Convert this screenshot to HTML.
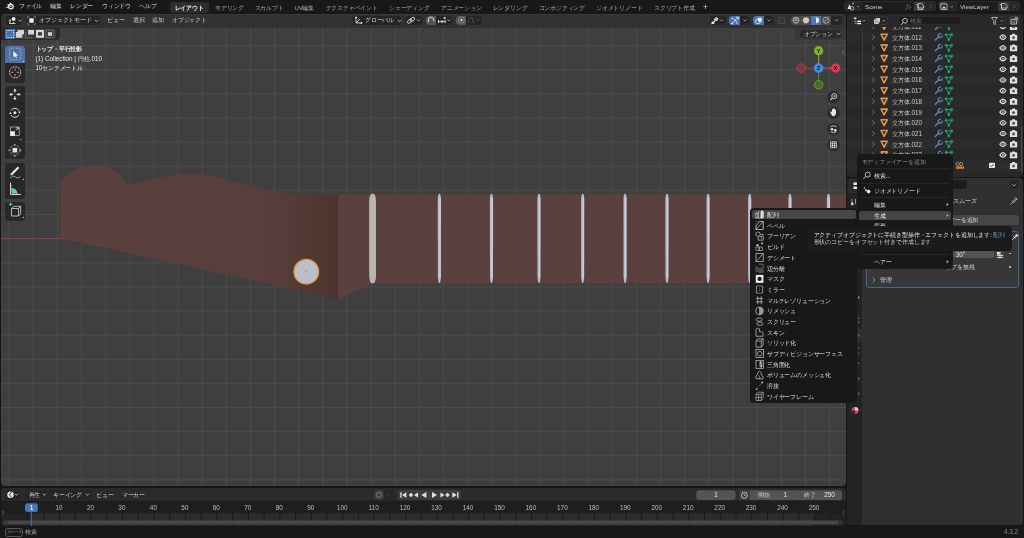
<!DOCTYPE html>
<html><head><meta charset="utf-8">
<style>
*{margin:0;padding:0;box-sizing:border-box}
body{will-change:transform}
html,body{width:1024px;height:538px;overflow:hidden;background:#161616;font-family:"Liberation Sans",sans-serif;color:#d0d0d0;font-size:6px;line-height:1}
.a{position:absolute}
.t{position:absolute;white-space:nowrap;font-size:6px;line-height:8px;color:#cfcfcf;font-weight:500;letter-spacing:-0.18px}
.n{letter-spacing:0}
#top{left:0;top:0;width:1024px;height:14px;background:#181818}
#vp{left:1px;top:13.8px;width:845px;height:472.2px;border-radius:4px;overflow:hidden;background-color:#3f3f3f}
#grid{left:0;top:0;width:845px;height:472px}
#vphead{left:0;top:0;width:845px;height:13.8px;background:rgba(47,47,47,0.85);box-shadow:inset 0 1px 0 rgba(255,255,255,0.045)}
#outl{left:846.7px;top:13.9px;width:176px;height:163px;border-radius:4px;overflow:hidden;background:#282828}
#props{left:847.2px;top:178.1px;width:175.5px;height:346.7px;border-radius:4px;overflow:hidden;background:#303030}
#tl{left:1px;top:487.8px;width:845px;height:37.8px;border-radius:4px;overflow:hidden;background:#1e1e1e}
#status{left:0;top:525.6px;width:1024px;height:12.4px;background:#181818}
</style></head>
<body>
<div id="top" class="a">
 <svg class="a" style="left:0;top:0" width="18" height="13" viewBox="0 0 18 13"><path d="M5.3 7.9 L8.7 5.6 L6.7 4.6 L9.6 4.1 L10 2.3 L12.3 4.2 L10.5 5 L8.5 7.5 Z" fill="#e6e6e6"/><circle cx="10.9" cy="6.6" r="2.3" fill="none" stroke="#e6e6e6" stroke-width="1.3"/><circle cx="10.9" cy="6.5" r="0.8" fill="#e6e6e6"/></svg>
 <span class="t" style="left:19px;top:2.3px;color:#d6d6d6;width:23.28px;text-align-last:justify">ファイル</span>
 <span class="t" style="left:50px;top:2.3px;color:#d6d6d6;width:11.64px;text-align-last:justify">編集</span>
 <span class="t" style="left:70px;top:2.3px;color:#d6d6d6;width:23.28px;text-align-last:justify">レンダー</span>
 <span class="t" style="left:102px;top:2.3px;color:#d6d6d6;width:29.11px;text-align-last:justify">ウィンドウ</span>
 <span class="t" style="left:139px;top:2.3px;color:#d6d6d6;width:17.47px;text-align-last:justify">ヘルプ</span>
 <div class="a" style="left:169.5px;top:2.4px;width:39px;height:10.3px;background:#2d2d2d;border-radius:3px"></div>
 <span class="t" style="left:174.5px;top:3.5px;color:#f0f0f0;font-weight:bold;width:29.11px;text-align-last:justify">レイアウト</span>
 <span class="t" style="left:215px;top:3.5px;color:#a8a8a8;width:29.11px;text-align-last:justify">モデリング</span>
 <span class="t" style="left:254.5px;top:3.5px;color:#a8a8a8;width:29.11px;text-align-last:justify">スカルプト</span>
 <span class="t" style="left:294.5px;top:3.5px;color:#a8a8a8;width:19.62px;text-align-last:justify">UV編集</span>
 <span class="t" style="left:325.5px;top:3.5px;color:#a8a8a8;width:52.39px;text-align-last:justify">テクスチャペイント</span>
 <span class="t" style="left:389px;top:3.5px;color:#a8a8a8;width:40.75px;text-align-last:justify">シェーディング</span>
 <span class="t" style="left:441px;top:3.5px;color:#a8a8a8;width:40.75px;text-align-last:justify">アニメーション</span>
 <span class="t" style="left:492.5px;top:3.5px;color:#a8a8a8;width:34.92px;text-align-last:justify">レンダリング</span>
 <span class="t" style="left:538.5px;top:3.5px;color:#a8a8a8;width:46.56px;text-align-last:justify">コンポジティング</span>
 <span class="t" style="left:596px;top:3.5px;color:#a8a8a8;width:46.56px;text-align-last:justify">ジオメトリノード</span>
 <span class="t" style="left:654px;top:3.5px;color:#a8a8a8;width:40.75px;text-align-last:justify">スクリプト作成</span>
 <span class="t" style="left:702.8px;top:3.2px;color:#c8c8c8;font-size:9px;line-height:9px;font-weight:normal">+</span>
 <!-- scene -->
 <div class="a" style="left:844.4px;top:1.4px;width:91.3px;height:10.1px;background:#262626;border-radius:3px;border:0.6px solid #2c2c2c"></div>
 <div class="a" style="left:862px;top:2px;width:52.3px;height:9px;background:#1d1d1d"></div>
 <div class="a" style="left:914.3px;top:2px;width:11.2px;height:9px;background:#3a3a3a"></div>
 <span class="t n" style="left:865px;top:2.6px;color:#d0d0d0;font-size:6.2px">Scene</span>
 <div class="a" style="left:938.5px;top:1.4px;width:81px;height:10.1px;background:#262626;border-radius:3px;border:0.6px solid #2c2c2c"></div>
 <div class="a" style="left:956.5px;top:2px;width:41.5px;height:9px;background:#1d1d1d"></div>
 <div class="a" style="left:998px;top:2px;width:11px;height:9px;background:#3a3a3a"></div>
 <span class="t n" style="left:960px;top:2.6px;color:#d0d0d0;font-size:6.2px">ViewLayer</span>
 <svg class="a" style="left:0;top:0" width="1024" height="14">
  <path d="M847.5 9 L849.5 4 L851.5 9 Z" fill="#e0e0e0"/><circle cx="852" cy="8.3" r="1.8" fill="none" stroke="#ccc" stroke-width="0.7"/><circle cx="853" cy="3.5" r="0.8" fill="#ddd"/>
  <path d="M856.8 6 L858 7.2 L859.2 6" stroke="#bbb" stroke-width="0.6" fill="none"/>
  <path d="M905 10 L907.5 7.5 M906 5.5 L909.5 9 M908 4 L911 7 M908 4 L907 6 M911 7 L909 8" stroke="#777" stroke-width="0.6" fill="none"/>
  <path d="M916.5 4.5 H918 V9.5 H922.5 V8 M918 3.5 H921.5 L923.5 5.5 V8 H918 Z" stroke="#ddd" stroke-width="0.7" fill="none"/>
  <path d="M928.5 4.5 L932.5 8.5 M932.5 4.5 L928.5 8.5" stroke="#555" stroke-width="0.6"/>
  <path d="M941 9.5 V4 H947 V9.5 Z" fill="none" stroke="#ddd" stroke-width="0.7"/><path d="M942 8.5 L944 6 L946 8.5 Z" fill="#ddd"/><path d="M940 8.5 V3 H946" stroke="#aaa" stroke-width="0.5" fill="none"/>
  <path d="M950.5 6 L951.7 7.2 L952.9 6" stroke="#bbb" stroke-width="0.6" fill="none"/>
  <path d="M1000 4.5 H1001.5 V9.5 H1006 V8 M1001.5 3.5 H1005 L1007 5.5 V8 H1001.5 Z" stroke="#ddd" stroke-width="0.7" fill="none"/>
  <path d="M1012.5 4.5 L1016.5 8.5 M1016.5 4.5 L1012.5 8.5" stroke="#555" stroke-width="0.6"/>
 </svg>
</div>
<div id="vp" class="a">
  <svg id="grid" class="a" width="845" height="472" viewBox="0 0 845 472">
    <defs>
      <pattern id="gp" x="7.6" y="6.95" width="24.13" height="24.13" patternUnits="userSpaceOnUse">
        <rect x="0" y="0" width="1" height="24.13" fill="#4b4b4b"/>
        <rect x="0" y="0" width="24.13" height="1" fill="#4b4b4b"/>
      </pattern>
    </defs>
    <rect width="845" height="472" fill="url(#gp)"/>
  </svg>
  <div id="vphead" class="a">
  <div class="a" style="left:5px;top:2px;width:15px;height:9px;background:#252525;border-radius:3px"></div>
  <svg class="a" style="left:6.5px;top:2px" width="14" height="9" viewBox="0 0 14 9"><path d="M2 8 V3.2 M1.2 7.5 H7.5 M0.8 4.8 H3 M5.5 7.5 V6" stroke="#d8d8d8" stroke-width="0.9" fill="none"/><circle cx="5.6" cy="3" r="2" fill="#e6e6e6"/><path d="M10.3 3.7 L11.9 5.4 L13.5 3.7" stroke="#c8c8c8" stroke-width="0.8" fill="none"/></svg>
  <div class="a" style="left:25px;top:2px;width:74px;height:9px;background:#252525;border-radius:3px"></div>
  <svg class="a" style="left:26px;top:1.8px" width="9" height="9" viewBox="0 0 9 9"><rect x="2.3" y="2.3" width="4.4" height="4.4" rx="0.4" fill="#f0f0f0"/><path d="M0.7 2.3 V0.7 H2.3 M6.7 0.7 H8.3 V2.3 M8.3 6.7 V8.3 H6.7 M2.3 8.3 H0.7 V6.7" stroke="#bbb" stroke-width="0.6" fill="none"/></svg>
  <span class="t" style="left:38.3px;top:2.5px;width:52.39px;text-align-last:justify">オブジェクトモード</span>
  <svg class="a" style="left:92.5px;top:4.8px" width="6" height="4" viewBox="0 0 6 4"><path d="M0.7 0.8 L2.6 2.8 L4.5 0.8" stroke="#c8c8c8" stroke-width="0.8" fill="none"/></svg>
  <span class="t" style="left:106px;top:2.5px;width:17.47px;text-align-last:justify">ビュー</span>
  <span class="t" style="left:132px;top:2.5px;width:11.64px;text-align-last:justify">選択</span>
  <span class="t" style="left:151px;top:2.5px;width:11.64px;text-align-last:justify">追加</span>
  <span class="t" style="left:171px;top:2.5px;width:34.92px;text-align-last:justify">オブジェクト</span>
  <div class="a" style="left:351.5px;top:2.4px;width:48.5px;height:8.5px;background:#252525;border-radius:3px"></div>
  <svg class="a" style="left:353px;top:2.4px" width="9" height="9" viewBox="0 0 9 9"><path d="M2 1 V7 H8 M2 7 L6 3" stroke="#ddd" stroke-width="0.9" fill="none"/><circle cx="2" cy="1.5" r="0.9" fill="#ddd"/><circle cx="7.5" cy="7" r="0.9" fill="#ddd"/></svg>
  <span class="t" style="left:364px;top:2.5px;width:29.11px;text-align-last:justify">グローバル</span>
  <svg class="a" style="left:395.5px;top:4.8px" width="6" height="4" viewBox="0 0 6 4"><path d="M0.7 0.8 L2.6 2.8 L4.5 0.8" stroke="#c8c8c8" stroke-width="0.8" fill="none"/></svg>
  <div class="a" style="left:405px;top:2.4px;width:15.5px;height:8.5px;background:#252525;border-radius:3px"></div>
  <svg class="a" style="left:405px;top:2.4px" width="16" height="9" viewBox="0 0 16 9"><ellipse cx="3.7" cy="5.2" rx="2.6" ry="1.6" transform="rotate(-40 3.7 5.2)" fill="none" stroke="#e0e0e0" stroke-width="0.85"/><ellipse cx="6.4" cy="3.4" rx="2.6" ry="1.6" transform="rotate(-40 6.4 3.4)" fill="none" stroke="#e0e0e0" stroke-width="0.85"/><path d="M11.2 3.6 L12.6 5 L14 3.6" stroke="#c8c8c8" stroke-width="0.8" fill="none"/></svg>
  <div class="a" style="left:425px;top:2.4px;width:26px;height:8.5px;background:#252525;border-radius:3px"></div>
  <div class="a" style="left:425px;top:2.4px;width:10px;height:8.5px;background:#565656;border-radius:3px 0 0 3px"></div>
  <svg class="a" style="left:425px;top:2.4px" width="10" height="9" viewBox="0 0 10 9"><path d="M2.6 6.4 L2.2 4.2 A2.9 2.9 0 0 1 7.6 2.8 L7.8 5.2" stroke="#bdbdbd" stroke-width="1.3" fill="none"/><path d="M4.4 6 L4.2 4.4 A1.2 1.2 0 0 1 6.2 3.6 L6.3 5" stroke="#555" stroke-width="0.5" fill="none"/></svg>
  <svg class="a" style="left:436px;top:2.4px" width="15" height="9" viewBox="0 0 15 9"><path d="M1 5.6 H8.5 M1.4 4 V7.2 M5 4 V7.2 M8.1 4 V7.2" stroke="#e0e0e0" stroke-width="0.9" fill="none"/><circle cx="7.6" cy="1.9" r="1" fill="#f0f0f0"/><path d="M10.4 3.6 L11.8 5 L13.2 3.6" stroke="#c8c8c8" stroke-width="0.8" fill="none"/></svg>
  <div class="a" style="left:454.5px;top:2.4px;width:26px;height:8.5px;background:#252525;border-radius:3px"></div>
  <div class="a" style="left:454.5px;top:2.4px;width:10.5px;height:8.5px;background:#565656;border-radius:3px 0 0 3px"></div>
  <svg class="a" style="left:455.5px;top:2.5px" width="9" height="8" viewBox="0 0 9 8"><circle cx="4.4" cy="4" r="3" fill="none" stroke="#999" stroke-width="0.6"/><circle cx="4.4" cy="4" r="1.1" fill="#eee"/></svg>
  <svg class="a" style="left:466px;top:2.5px" width="14" height="8" viewBox="0 0 14 8"><path d="M1 7 Q3 1 4 1 Q5 1 7 7" stroke="#666" stroke-width="0.7" fill="none"/><path d="M9.5 3 L11 4.5 L12.5 3" stroke="#555" stroke-width="0.7" fill="none"/></svg>
  <!-- right side -->
  <div class="a" style="left:708.5px;top:2.4px;width:16px;height:8.5px;background:#252525;border-radius:3px"></div>
  <svg class="a" style="left:709px;top:2.4px" width="15" height="9" viewBox="0 0 15 9"><path d="M1.2 8.3 L2 5 L3 6 L4.4 4.6 L5.3 5.5 L3.9 6.9 L4.9 7.7 Z" fill="#e8e8e8"/><path d="M3.6 3.6 L6 1 L8.3 2.2 L7.6 4.8 L5 5 Z" fill="#d8d8d8"/><path d="M5.3 2.4 L7 3.4" stroke="#555" stroke-width="0.5"/><path d="M10 3.5 L11.5 5 L13 3.5" stroke="#bbb" stroke-width="0.7" fill="none"/></svg>
  <div class="a" style="left:728px;top:2.4px;width:21px;height:8.5px;background:#252525;border-radius:3px"></div>
  <div class="a" style="left:728px;top:2.4px;width:10.5px;height:8.5px;background:#4772b3;border-radius:3px 0 0 3px"></div>
  <svg class="a" style="left:729px;top:2.4px" width="20" height="9" viewBox="0 0 20 9"><path d="M1.8 7.8 L8.3 1.3 M5.9 1.3 H8.3 V3.7 M1.4 2.3 Q6 2.8 7.2 7.9" stroke="#f0f0f0" stroke-width="0.8" fill="none"/><circle cx="1.9" cy="7.6" r="0.9" fill="#f0f0f0"/><path d="M13.5 3.5 L15 5 L16.5 3.5" stroke="#bbb" stroke-width="0.7" fill="none"/></svg>
  <div class="a" style="left:752px;top:2.4px;width:21px;height:8.5px;background:#252525;border-radius:3px"></div>
  <div class="a" style="left:752px;top:2.4px;width:10.5px;height:8.5px;background:#4772b3;border-radius:3px 0 0 3px"></div>
  <svg class="a" style="left:753px;top:2.4px" width="20" height="9" viewBox="0 0 20 9"><circle cx="4" cy="5.3" r="2.5" fill="none" stroke="#f0f0f0" stroke-width="0.8"/><circle cx="5.8" cy="3.8" r="2.3" fill="#f0f0f0"/><path d="M13.5 3.5 L15 5 L16.5 3.5" stroke="#bbb" stroke-width="0.7" fill="none"/></svg>
  <div class="a" style="left:775.9px;top:2.2px;width:9.8px;height:8.7px;background:#313131;border-radius:3px"></div>
  <svg class="a" style="left:776.3px;top:2.4px" width="9" height="9" viewBox="0 0 9 9"><rect x="1.2" y="1.2" width="6.5" height="6.5" fill="none" stroke="#555" stroke-width="0.6"/><rect x="2.7" y="2.7" width="3.5" height="3.5" fill="none" stroke="#4a4a4a" stroke-width="0.6"/></svg>
  <div class="a" style="left:789.5px;top:2.4px;width:51.5px;height:8.5px;background:#252525;border-radius:3px"></div>
  <div class="a" style="left:789.5px;top:2.4px;width:10px;height:8.5px;background:#4a4a4a;border-radius:3px 0 0 3px"></div>
  <div class="a" style="left:799.5px;top:2.4px;width:10px;height:8.5px;background:#4a4a4a"></div>
  <div class="a" style="left:809.5px;top:2.4px;width:10px;height:8.5px;background:#4772b3"></div>
  <div class="a" style="left:819.5px;top:2.4px;width:10px;height:8.5px;background:#4a4a4a"></div>
  <svg class="a" style="left:789.5px;top:2.4px" width="52" height="9" viewBox="0 0 52 9"><circle cx="5" cy="4.3" r="3" fill="none" stroke="#ddd" stroke-width="0.6"/><path d="M2 4.3 H8 M5 1.3 V7.3 M2.8 2.5 Q5 4 7.2 2.5" stroke="#ddd" stroke-width="0.5" fill="none"/><circle cx="15" cy="4.3" r="3.1" fill="#c8c8c8"/><circle cx="25" cy="4.3" r="3" fill="#f0f0f0"/><path d="M25 1.3 A3 3 0 0 0 25 7.3 Z" fill="#4772b3"/><path d="M25 4.3 H22" stroke="#4772b3" stroke-width="0.1"/><circle cx="35" cy="4.3" r="3" fill="none" stroke="#ddd" stroke-width="0.6"/><path d="M33 6 L37 2.5" stroke="#ddd" stroke-width="0.6"/><path d="M44 3.5 L45.5 5 L47 3.5" stroke="#bbb" stroke-width="0.7" fill="none"/></svg>
</div>

<svg class="a" style="left:0;top:0" width="845" height="472" viewBox="1 13.8 845 472">
 <defs>
  <linearGradient id="lg1" x1="60" y1="0" x2="338" y2="0" gradientUnits="userSpaceOnUse">
   <stop offset="0" stop-color="#5a413e"/><stop offset="0.78" stop-color="#583e3a"/><stop offset="1" stop-color="#4d332e"/>
  </linearGradient>
 </defs>
 <path d="M1 238.3 H68" stroke="#9c3a48" stroke-width="0.9"/>
 <path d="M60.6 182 L64 178 L69.5 173.6 L76 169.5 L82.5 166.5 L89 165 L95.5 164.7 L101 165.2 L105.8 166.5 L111 169 L117.9 173.5 L122 178 L128.4 185.2 L155 178 L177.4 174.6 L190.9 173.5 L211 175.3 L233.5 181.3 L256 187 L278.5 192.1 L301 194.8 L338.2 194.1 L338.2 299 L60.6 237.7 Z" fill="url(#lg1)"/>
 <path d="M338.2 194.1 L846 194.1 L846 282.6 L370.7 283.2 L338.2 299 Z" fill="#5b413e"/>
 <path d="M369.2 200 Q369.5 193.2 372.6 193.2 Q375.7 193.2 376 200 L376 276 Q375.7 283.3 372.6 283.3 Q369.5 283.3 369.2 276 Z" fill="#b6b6ae"/>
 <path d="M437.79999999999995 200 Q437.9 194 439.4 193.3 Q440.9 194 441.0 200 L440.9 276 Q440.7 282.5 439.4 283 Q438.09999999999997 282.5 437.9 276 Z" fill="#b7bfcc"/><path d="M440.0 198 V278" stroke="#d9dee6" stroke-width="0.6"/>
<path d="M489.9 200 Q490.0 194 491.5 193.3 Q493.0 194 493.1 200 L493.0 276 Q492.8 282.5 491.5 283 Q490.2 282.5 490.0 276 Z" fill="#b7bfcc"/><path d="M492.1 198 V278" stroke="#d9dee6" stroke-width="0.6"/>
<path d="M537.4 200 Q537.5 194 539 193.3 Q540.5 194 540.6 200 L540.5 276 Q540.3 282.5 539 283 Q537.7 282.5 537.5 276 Z" fill="#b7bfcc"/><path d="M539.6 198 V278" stroke="#d9dee6" stroke-width="0.6"/>
<path d="M581.1 200 Q581.2 194 582.7 193.3 Q584.2 194 584.3000000000001 200 L584.2 276 Q584.0 282.5 582.7 283 Q581.4000000000001 282.5 581.2 276 Z" fill="#b7bfcc"/><path d="M583.3000000000001 198 V278" stroke="#d9dee6" stroke-width="0.6"/>
<path d="M623.5 200 Q623.6 194 625.1 193.3 Q626.6 194 626.7 200 L626.6 276 Q626.4 282.5 625.1 283 Q623.8000000000001 282.5 623.6 276 Z" fill="#b7bfcc"/><path d="M625.7 198 V278" stroke="#d9dee6" stroke-width="0.6"/>
<path d="M665.4 200 Q665.5 194 667 193.3 Q668.5 194 668.6 200 L668.5 276 Q668.3 282.5 667 283 Q665.7 282.5 665.5 276 Z" fill="#b7bfcc"/><path d="M667.6 198 V278" stroke="#d9dee6" stroke-width="0.6"/>
<path d="M706.5 200 Q706.6 194 708.1 193.3 Q709.6 194 709.7 200 L709.6 276 Q709.4 282.5 708.1 283 Q706.8000000000001 282.5 706.6 276 Z" fill="#b7bfcc"/><path d="M708.7 198 V278" stroke="#d9dee6" stroke-width="0.6"/>
<path d="M748.1 200 Q748.2 194 749.7 193.3 Q751.2 194 751.3000000000001 200 L751.2 276 Q751.0 282.5 749.7 283 Q748.4000000000001 282.5 748.2 276 Z" fill="#b7bfcc"/><path d="M750.3000000000001 198 V278" stroke="#d9dee6" stroke-width="0.6"/>
<path d="M788.4 200 Q788.5 194 790 193.3 Q791.5 194 791.6 200 L791.5 276 Q791.3 282.5 790 283 Q788.7 282.5 788.5 276 Z" fill="#b7bfcc"/><path d="M790.6 198 V278" stroke="#d9dee6" stroke-width="0.6"/>
<path d="M826.9 200 Q827.0 194 828.5 193.3 Q830.0 194 830.1 200 L830.0 276 Q829.8 282.5 828.5 283 Q827.2 282.5 827.0 276 Z" fill="#b7bfcc"/><path d="M829.1 198 V278" stroke="#d9dee6" stroke-width="0.6"/>

 <circle cx="306.3" cy="271.5" r="12.3" fill="#b9bfcb" stroke="#e8963a" stroke-width="1.3"/>
 <circle cx="306.3" cy="271.5" r="1.1" fill="#e8963a"/>
</svg>
<!-- gizmo -->
<svg class="a" style="left:0;top:0" width="845" height="472" viewBox="1 13.8 845 472">
 <path d="M818.6 67.9 H835.7" stroke="#d43a52" stroke-width="1.1"/>
 <path d="M818.6 67.9 H801.2" stroke="#9c3040" stroke-width="1.1"/>
 <path d="M818.6 67.9 V50.5" stroke="#7ab020" stroke-width="1.1"/>
 <path d="M818.6 67.9 V84.6" stroke="#5e8a1e" stroke-width="1.1"/>
 <circle cx="801.2" cy="67.9" r="4.3" fill="#7a3a44" stroke="#c0384c" stroke-width="0.8"/>
 <circle cx="818.6" cy="84.6" r="4.3" fill="#4f6a2a" stroke="#78a826" stroke-width="0.8"/>
 <circle cx="835.7" cy="67.9" r="4.6" fill="#e2384e"/>
 <circle cx="818.6" cy="50.5" r="4.6" fill="#7cb623"/>
 <circle cx="818.6" cy="67.9" r="4.8" fill="#3b8ce8"/>
 <text x="835.7" y="70" font-size="5.5" font-weight="bold" fill="#111" text-anchor="middle" font-family="Liberation Sans">X</text>
 <text x="818.6" y="52.6" font-size="5.5" font-weight="bold" fill="#111" text-anchor="middle" font-family="Liberation Sans">Y</text>
 <text x="818.6" y="70" font-size="5.5" font-weight="bold" fill="#111" text-anchor="middle" font-family="Liberation Sans">Z</text>
 <path d="M844.5 50.3 L842.8 52.3 L844.5 54.3" stroke="#999" stroke-width="0.7" fill="none"/>
 <circle cx="833.5" cy="96.9" r="6.3" fill="#2c2c2c"/>
 <circle cx="833.5" cy="112.5" r="6.3" fill="#2c2c2c"/>
 <circle cx="833.5" cy="129" r="6.3" fill="#2c2c2c"/>
 <circle cx="833.5" cy="144.8" r="6.3" fill="#2c2c2c"/>
 <circle cx="834.3" cy="95.9" r="2.6" fill="none" stroke="#e0e0e0" stroke-width="0.8"/>
 <path d="M834.3 94.6 V97.2 M833 95.9 H835.6" stroke="#e0e0e0" stroke-width="0.6"/>
 <path d="M832.4 97.9 L830.3 100" stroke="#e0e0e0" stroke-width="1.1"/>
 <path d="M831 113.5 L830 111.5 L831 111 L832 112.2 V109 L833 108.7 V111.5 V108.2 L834 108 V111.5 V108.5 L835 108.5 V111.5 V109.5 L836 109.7 V113 Q835.5 116 833 116 Q831.8 115.5 831 113.5 Z" fill="#e6e6e6"/>
 <path d="M830.5 126.5 Q833.5 124.5 836.5 126.5 M830.5 131.5 Q833.5 133.5 836.5 131.5" stroke="#e0e0e0" stroke-width="0.8" fill="none"/>
 <circle cx="832" cy="129" r="1.3" fill="#e0e0e0"/><circle cx="835.2" cy="130" r="1.3" fill="#e0e0e0"/>
 <path d="M830.5 141.5 H836.5 V147.5 H830.5 Z M832.5 141.5 V147.5 M834.5 141.5 V147.5 M830.5 143.5 H836.5 M830.5 145.5 H836.5" stroke="#e0e0e0" stroke-width="0.7" fill="none"/>
</svg>
<!-- toolbar -->
<div class="a" style="left:3.8px;top:32.4px;width:20.2px;height:36.6px;background:#282828;border-radius:3px"></div>
<div class="a" style="left:3.8px;top:32.4px;width:20.2px;height:17px;background:#4772b3;border-radius:3px 3px 0 0"></div>
<div class="a" style="left:3.8px;top:72.2px;width:20.2px;height:73px;background:#282828;border-radius:3px"></div>
<div class="a" style="left:3.8px;top:149.7px;width:20.2px;height:35.5px;background:#282828;border-radius:3px"></div>
<div class="a" style="left:3.8px;top:188.4px;width:20.2px;height:18.5px;background:#282828;border-radius:3px"></div>
<svg class="a" style="left:3.8px;top:32.4px" width="21" height="175" viewBox="0 0 21 175">
 <!-- select box -->
 <rect x="4.6" y="2.2" width="11.2" height="11.6" rx="1" fill="none" stroke="#e8a848" stroke-width="0.9" stroke-dasharray="1.6 1.1"/>
 <path d="M8.3 5 V11.6 L9.9 10.1 L11.1 12.3 L12 11.8 L10.9 9.7 L13.1 9.5 Z" fill="#f0f0f0"/>
 <path d="M17.5 16 L19 16 L19 14.5 Z" fill="#ddd"/>
 <!-- cursor -->
 <circle cx="10.1" cy="26.3" r="5.6" fill="none" stroke="#e0e0e0" stroke-width="1" stroke-dasharray="1.7 1.2"/>
 <circle cx="10.1" cy="26.3" r="5.6" fill="none" stroke="#c83838" stroke-width="1" stroke-dasharray="1.2 1.7" stroke-dashoffset="-1.7"/>
 <path d="M10.1 22.3 V24.7 M10.1 27.9 V30.3 M6.1 26.3 H8.5 M11.7 26.3 H14.1" stroke="#8a8a8a" stroke-width="1.2"/>
 <!-- move -->
 <path d="M9.9 42.6 L8.2 44.8 H11.6 Z M9.9 54.2 L8.2 52 H11.6 Z M4.1 48.4 L6.3 46.7 V50.1 Z M15.7 48.4 L13.5 46.7 V50.1 Z" fill="#e6e6e6"/>
 <path d="M9.9 44.5 V46.6 M9.9 50.2 V52.3 M6 48.4 H8.1 M11.7 48.4 H13.8" stroke="#e6e6e6" stroke-width="1.1"/>
 <path d="M3 57.6 H18" stroke="#222" stroke-width="0.6"/>
 <!-- rotate -->
 <path d="M5.9 64.6 A4.6 4.6 0 0 1 13.9 64.6 M13.9 69 A4.6 4.6 0 0 1 5.9 69" stroke="#e6e6e6" stroke-width="0.9" fill="none"/>
 <circle cx="9.9" cy="66.8" r="1.5" fill="#e6e6e6"/>
 <path d="M13.2 65.6 L15.6 65.6 L14.4 67.8 Z M6.6 68 L4.2 68 L5.4 65.8 Z" fill="#e6e6e6"/>
 <path d="M3 75.9 H18" stroke="#222" stroke-width="0.6"/>
 <!-- scale -->
 <rect x="5.6" y="81" width="8.6" height="8.6" fill="none" stroke="#bbb" stroke-width="0.7"/>
 <rect x="5.3" y="85.3" width="4.6" height="4.6" fill="#ececec"/>
 <path d="M10.8 84.2 L13.2 81.8 M11.4 81.7 H13.3 V83.6" stroke="#e6e6e6" stroke-width="0.8" fill="none"/>
 <path d="M14.6 94.2 L16.3 94.2 L16.3 92.5 Z" fill="#bbb"/>
 <path d="M3 95 H18" stroke="#222" stroke-width="0.6"/>
 <!-- transform -->
 <circle cx="9.9" cy="104.2" r="4.9" fill="none" stroke="#cfcfcf" stroke-width="0.7" stroke-dasharray="2.2 1.3"/>
 <rect x="7.6" y="101.9" width="4.6" height="4.6" fill="#e6e6e6"/>
 <path d="M8.7 98.6 L9.9 97.7 L11.1 98.6 Z M8.7 109.8 L9.9 110.7 L11.1 109.8 Z M4.3 103 L3.4 104.2 L4.3 105.4 Z M15.5 103 L16.4 104.2 L15.5 105.4 Z" fill="#e6e6e6"/>
 <!-- annotate -->
 <path d="M5.8 127.5 L12.8 120.5 L14.3 122 L7.3 129 L5.5 129.5 Z" fill="#e6e6e6"/>
 <path d="M5 132 Q8 128.5 10.5 131 Q13 133.5 15.5 130.5" stroke="#6ecf9a" stroke-width="0.8" fill="none"/>
 <path d="M17.5 134 L19 134 L19 132.5 Z" fill="#ddd"/>
 <!-- measure -->
 <path d="M5.5 136.5 V148.5 H16" stroke="#e6e6e6" stroke-width="0.9" fill="none"/>
 <path d="M6.5 147.5 V142 A6 6 0 0 1 12.5 147.5 Z" fill="#6ecf9a"/>
 <path d="M5.5 140 H7 M5.5 143 H7 M9 148.5 V147 M12 148.5 V147" stroke="#e6e6e6" stroke-width="0.6"/>
 <!-- add cube -->
 <path d="M6.5 162.5 H13.5 V170 H6.5 Z M6.5 162.5 L8.5 160.3 H15.6 V167.8 L13.5 170 M13.5 162.5 L15.6 160.3" stroke="#d8d8d8" stroke-width="0.8" fill="none"/>
 <path d="M3.8 158.3 H7.4 M5.6 156.5 V160.1" stroke="#6ecf9a" stroke-width="1"/>
 <path d="M17.5 172 L19 172 L19 170.5 Z" fill="#ddd"/>
</svg>
<!-- overlay text -->
<span class="t" style="left:34.5px;top:31.6px;color:#e8e8e8;font-size:6.3px;font-weight:bold;width:46.56px;text-align-last:justify">トップ・平行投影</span>
<span class="t n" style="left:34.5px;top:41.4px;color:#e8e8e8;font-size:6.3px;width:66.50px;text-align-last:justify">(1) Collection | 円柱.010</span>
<span class="t" style="left:34.5px;top:50.6px;color:#e8e8e8;font-size:6.3px;width:47.39px;text-align-last:justify">10センチメートル</span>
<!-- options -->
<div class="a" style="left:794.2px;top:13.8px;width:52px;height:12.7px;background:#373737;border-radius:0 0 0 4px"></div>
<div class="a" style="left:799.4px;top:16.2px;width:40.4px;height:8.2px;background:#2a2a2a;border-radius:3px"></div>
<span class="t" style="left:802.8px;top:16.3px;font-size:6.2px;width:29.11px;text-align-last:justify">オプション</span>
<svg class="a" style="left:835.3px;top:18.5px" width="6" height="4" viewBox="0 0 6 4"><path d="M0.7 0.8 L2.6 2.8 L4.5 0.8" stroke="#c8c8c8" stroke-width="0.8" fill="none"/></svg>
<!-- tool header -->
<div class="a" style="left:0px;top:13.8px;width:58.6px;height:12.4px;background:#2a2a2a;border-radius:0 0 4px 0"></div>
<div class="a" style="left:4px;top:15.2px;width:51px;height:9.7px;background:#3a3a3a;border-radius:2px"></div>
<div class="a" style="left:4px;top:15.2px;width:10.3px;height:9.7px;background:#4772b3;border-radius:2px 0 0 2px"></div>
<svg class="a" style="left:4px;top:15.2px" width="52" height="10" viewBox="0 0 52 10"><g fill="#f5f5f5"><rect x="1.2" y="1" width="1" height="1"/><rect x="3.5" y="1" width="1" height="1"/><rect x="5.8" y="1" width="1" height="1"/><rect x="8.1" y="1" width="1" height="1"/><rect x="1.2" y="8" width="1" height="1"/><rect x="3.5" y="8" width="1" height="1"/><rect x="5.8" y="8" width="1" height="1"/><rect x="8.1" y="8" width="1" height="1"/><rect x="1.2" y="3.3" width="1" height="1" opacity=".6"/><rect x="1.2" y="5.7" width="1" height="1" opacity=".6"/><rect x="8.1" y="3.3" width="1" height="1"/><rect x="8.1" y="5.7" width="1" height="1"/></g>
<g fill="#d4d4d4"><rect x="12.6" y="0.9" width="6.4" height="4.4"/><rect x="10.8" y="2.9" width="6.5" height="5.9"/><rect x="23.1" y="0.9" width="5.9" height="4.6"/><rect x="31" y="0.9" width="8" height="7.9"/><rect x="43" y="3.2" width="4" height="3.6"/></g><rect x="33" y="3.2" width="4" height="3.3" fill="#3a3a3a"/>
<path d="M20.6 3.2 V8.8 H26.8" stroke="#aaa" stroke-width="0.8" stroke-dasharray="0.9 0.9" fill="none"/><rect x="41.2" y="1.1" width="7.6" height="7.6" stroke="#aaa" stroke-width="0.8" stroke-dasharray="0.9 0.9" fill="none"/></svg>
</div>
<div id="outl" class="a">
 <svg class="a" style="left:0;top:0" width="176" height="163" viewBox="847 14 176 163">
  <rect x="847" y="31.85" width="176" height="10.7" fill="#2b2b2b"/><rect x="847" y="53.25" width="176" height="10.7" fill="#2b2b2b"/><rect x="847" y="74.65" width="176" height="10.7" fill="#2b2b2b"/><rect x="847" y="96.05" width="176" height="10.7" fill="#2b2b2b"/><rect x="847" y="117.45" width="176" height="10.7" fill="#2b2b2b"/><rect x="847" y="138.85" width="176" height="10.7" fill="#2b2b2b"/><rect x="847" y="160.25" width="176" height="10.7" fill="#2b2b2b"/>
  <path d="M862.5 28 V172" stroke="#3c3c3c" stroke-width="1"/>
  <g transform="translate(0 26.50)"><path d="M872.3 -2.2 L874.6 0 L872.3 2.2" stroke="#9a9a9a" stroke-width="0.7" fill="none"/>
<path d="M881.1 -3 H887.2 L884.15 2.9 Z" fill="none" stroke="#e0954f" stroke-width="1.6" stroke-linejoin="round"/>
<path d="M935.3 2.9 L938.9 -0.5" stroke="#6383c8" stroke-width="1.4" stroke-linecap="round"/><circle cx="940.2" cy="-1.6" r="1.9" fill="none" stroke="#6383c8" stroke-width="1.2"/><path d="M940.6 -2 L942.8 -4.2" stroke="#282828" stroke-width="1.3"/>
<path d="M946 -2.6 H951.7 L948.8 2.6 Z" fill="none" stroke="#1fa882" stroke-width="0.9"/><circle cx="946" cy="-2.6" r="1.2" fill="#1fa882"/><circle cx="951.7" cy="-2.6" r="1.2" fill="none" stroke="#1fa882" stroke-width="0.9"/><circle cx="948.8" cy="2.6" r="1.2" fill="#1fa882"/>
<path d="M999.8 0 Q1002.9 -4.6 1006 0 Q1002.9 4.6 999.8 0 Z" fill="none" stroke="#e6e6e6" stroke-width="1.1"/><circle cx="1002.9" cy="0" r="1.2" fill="#999"/>
<path d="M1009.9 -2.3 H1011.6 L1012.4 -3.5 H1014.8 L1015.6 -2.3 H1017.2 V3.4 H1009.9 Z" fill="#e2e2e2"/><circle cx="1013.55" cy="0.4" r="1.6" fill="#777"/><circle cx="1013.55" cy="0.4" r="0.7" fill="#333"/></g>
<g transform="translate(0 37.20)"><path d="M872.3 -2.2 L874.6 0 L872.3 2.2" stroke="#9a9a9a" stroke-width="0.7" fill="none"/>
<path d="M881.1 -3 H887.2 L884.15 2.9 Z" fill="none" stroke="#e0954f" stroke-width="1.6" stroke-linejoin="round"/>
<path d="M935.3 2.9 L938.9 -0.5" stroke="#6383c8" stroke-width="1.4" stroke-linecap="round"/><circle cx="940.2" cy="-1.6" r="1.9" fill="none" stroke="#6383c8" stroke-width="1.2"/><path d="M940.6 -2 L942.8 -4.2" stroke="#282828" stroke-width="1.3"/>
<path d="M946 -2.6 H951.7 L948.8 2.6 Z" fill="none" stroke="#1fa882" stroke-width="0.9"/><circle cx="946" cy="-2.6" r="1.2" fill="#1fa882"/><circle cx="951.7" cy="-2.6" r="1.2" fill="none" stroke="#1fa882" stroke-width="0.9"/><circle cx="948.8" cy="2.6" r="1.2" fill="#1fa882"/>
<path d="M999.8 0 Q1002.9 -4.6 1006 0 Q1002.9 4.6 999.8 0 Z" fill="none" stroke="#e6e6e6" stroke-width="1.1"/><circle cx="1002.9" cy="0" r="1.2" fill="#999"/>
<path d="M1009.9 -2.3 H1011.6 L1012.4 -3.5 H1014.8 L1015.6 -2.3 H1017.2 V3.4 H1009.9 Z" fill="#e2e2e2"/><circle cx="1013.55" cy="0.4" r="1.6" fill="#777"/><circle cx="1013.55" cy="0.4" r="0.7" fill="#333"/></g>
<g transform="translate(0 47.90)"><path d="M872.3 -2.2 L874.6 0 L872.3 2.2" stroke="#9a9a9a" stroke-width="0.7" fill="none"/>
<path d="M881.1 -3 H887.2 L884.15 2.9 Z" fill="none" stroke="#e0954f" stroke-width="1.6" stroke-linejoin="round"/>
<path d="M935.3 2.9 L938.9 -0.5" stroke="#6383c8" stroke-width="1.4" stroke-linecap="round"/><circle cx="940.2" cy="-1.6" r="1.9" fill="none" stroke="#6383c8" stroke-width="1.2"/><path d="M940.6 -2 L942.8 -4.2" stroke="#282828" stroke-width="1.3"/>
<path d="M946 -2.6 H951.7 L948.8 2.6 Z" fill="none" stroke="#1fa882" stroke-width="0.9"/><circle cx="946" cy="-2.6" r="1.2" fill="#1fa882"/><circle cx="951.7" cy="-2.6" r="1.2" fill="none" stroke="#1fa882" stroke-width="0.9"/><circle cx="948.8" cy="2.6" r="1.2" fill="#1fa882"/>
<path d="M999.8 0 Q1002.9 -4.6 1006 0 Q1002.9 4.6 999.8 0 Z" fill="none" stroke="#e6e6e6" stroke-width="1.1"/><circle cx="1002.9" cy="0" r="1.2" fill="#999"/>
<path d="M1009.9 -2.3 H1011.6 L1012.4 -3.5 H1014.8 L1015.6 -2.3 H1017.2 V3.4 H1009.9 Z" fill="#e2e2e2"/><circle cx="1013.55" cy="0.4" r="1.6" fill="#777"/><circle cx="1013.55" cy="0.4" r="0.7" fill="#333"/></g>
<g transform="translate(0 58.60)"><path d="M872.3 -2.2 L874.6 0 L872.3 2.2" stroke="#9a9a9a" stroke-width="0.7" fill="none"/>
<path d="M881.1 -3 H887.2 L884.15 2.9 Z" fill="none" stroke="#e0954f" stroke-width="1.6" stroke-linejoin="round"/>
<path d="M935.3 2.9 L938.9 -0.5" stroke="#6383c8" stroke-width="1.4" stroke-linecap="round"/><circle cx="940.2" cy="-1.6" r="1.9" fill="none" stroke="#6383c8" stroke-width="1.2"/><path d="M940.6 -2 L942.8 -4.2" stroke="#282828" stroke-width="1.3"/>
<path d="M946 -2.6 H951.7 L948.8 2.6 Z" fill="none" stroke="#1fa882" stroke-width="0.9"/><circle cx="946" cy="-2.6" r="1.2" fill="#1fa882"/><circle cx="951.7" cy="-2.6" r="1.2" fill="none" stroke="#1fa882" stroke-width="0.9"/><circle cx="948.8" cy="2.6" r="1.2" fill="#1fa882"/>
<path d="M999.8 0 Q1002.9 -4.6 1006 0 Q1002.9 4.6 999.8 0 Z" fill="none" stroke="#e6e6e6" stroke-width="1.1"/><circle cx="1002.9" cy="0" r="1.2" fill="#999"/>
<path d="M1009.9 -2.3 H1011.6 L1012.4 -3.5 H1014.8 L1015.6 -2.3 H1017.2 V3.4 H1009.9 Z" fill="#e2e2e2"/><circle cx="1013.55" cy="0.4" r="1.6" fill="#777"/><circle cx="1013.55" cy="0.4" r="0.7" fill="#333"/></g>
<g transform="translate(0 69.30)"><path d="M872.3 -2.2 L874.6 0 L872.3 2.2" stroke="#9a9a9a" stroke-width="0.7" fill="none"/>
<path d="M881.1 -3 H887.2 L884.15 2.9 Z" fill="none" stroke="#e0954f" stroke-width="1.6" stroke-linejoin="round"/>
<path d="M935.3 2.9 L938.9 -0.5" stroke="#6383c8" stroke-width="1.4" stroke-linecap="round"/><circle cx="940.2" cy="-1.6" r="1.9" fill="none" stroke="#6383c8" stroke-width="1.2"/><path d="M940.6 -2 L942.8 -4.2" stroke="#282828" stroke-width="1.3"/>
<path d="M946 -2.6 H951.7 L948.8 2.6 Z" fill="none" stroke="#1fa882" stroke-width="0.9"/><circle cx="946" cy="-2.6" r="1.2" fill="#1fa882"/><circle cx="951.7" cy="-2.6" r="1.2" fill="none" stroke="#1fa882" stroke-width="0.9"/><circle cx="948.8" cy="2.6" r="1.2" fill="#1fa882"/>
<path d="M999.8 0 Q1002.9 -4.6 1006 0 Q1002.9 4.6 999.8 0 Z" fill="none" stroke="#e6e6e6" stroke-width="1.1"/><circle cx="1002.9" cy="0" r="1.2" fill="#999"/>
<path d="M1009.9 -2.3 H1011.6 L1012.4 -3.5 H1014.8 L1015.6 -2.3 H1017.2 V3.4 H1009.9 Z" fill="#e2e2e2"/><circle cx="1013.55" cy="0.4" r="1.6" fill="#777"/><circle cx="1013.55" cy="0.4" r="0.7" fill="#333"/></g>
<g transform="translate(0 80.00)"><path d="M872.3 -2.2 L874.6 0 L872.3 2.2" stroke="#9a9a9a" stroke-width="0.7" fill="none"/>
<path d="M881.1 -3 H887.2 L884.15 2.9 Z" fill="none" stroke="#e0954f" stroke-width="1.6" stroke-linejoin="round"/>
<path d="M935.3 2.9 L938.9 -0.5" stroke="#6383c8" stroke-width="1.4" stroke-linecap="round"/><circle cx="940.2" cy="-1.6" r="1.9" fill="none" stroke="#6383c8" stroke-width="1.2"/><path d="M940.6 -2 L942.8 -4.2" stroke="#282828" stroke-width="1.3"/>
<path d="M946 -2.6 H951.7 L948.8 2.6 Z" fill="none" stroke="#1fa882" stroke-width="0.9"/><circle cx="946" cy="-2.6" r="1.2" fill="#1fa882"/><circle cx="951.7" cy="-2.6" r="1.2" fill="none" stroke="#1fa882" stroke-width="0.9"/><circle cx="948.8" cy="2.6" r="1.2" fill="#1fa882"/>
<path d="M999.8 0 Q1002.9 -4.6 1006 0 Q1002.9 4.6 999.8 0 Z" fill="none" stroke="#e6e6e6" stroke-width="1.1"/><circle cx="1002.9" cy="0" r="1.2" fill="#999"/>
<path d="M1009.9 -2.3 H1011.6 L1012.4 -3.5 H1014.8 L1015.6 -2.3 H1017.2 V3.4 H1009.9 Z" fill="#e2e2e2"/><circle cx="1013.55" cy="0.4" r="1.6" fill="#777"/><circle cx="1013.55" cy="0.4" r="0.7" fill="#333"/></g>
<g transform="translate(0 90.70)"><path d="M872.3 -2.2 L874.6 0 L872.3 2.2" stroke="#9a9a9a" stroke-width="0.7" fill="none"/>
<path d="M881.1 -3 H887.2 L884.15 2.9 Z" fill="none" stroke="#e0954f" stroke-width="1.6" stroke-linejoin="round"/>
<path d="M935.3 2.9 L938.9 -0.5" stroke="#6383c8" stroke-width="1.4" stroke-linecap="round"/><circle cx="940.2" cy="-1.6" r="1.9" fill="none" stroke="#6383c8" stroke-width="1.2"/><path d="M940.6 -2 L942.8 -4.2" stroke="#282828" stroke-width="1.3"/>
<path d="M946 -2.6 H951.7 L948.8 2.6 Z" fill="none" stroke="#1fa882" stroke-width="0.9"/><circle cx="946" cy="-2.6" r="1.2" fill="#1fa882"/><circle cx="951.7" cy="-2.6" r="1.2" fill="none" stroke="#1fa882" stroke-width="0.9"/><circle cx="948.8" cy="2.6" r="1.2" fill="#1fa882"/>
<path d="M999.8 0 Q1002.9 -4.6 1006 0 Q1002.9 4.6 999.8 0 Z" fill="none" stroke="#e6e6e6" stroke-width="1.1"/><circle cx="1002.9" cy="0" r="1.2" fill="#999"/>
<path d="M1009.9 -2.3 H1011.6 L1012.4 -3.5 H1014.8 L1015.6 -2.3 H1017.2 V3.4 H1009.9 Z" fill="#e2e2e2"/><circle cx="1013.55" cy="0.4" r="1.6" fill="#777"/><circle cx="1013.55" cy="0.4" r="0.7" fill="#333"/></g>
<g transform="translate(0 101.40)"><path d="M872.3 -2.2 L874.6 0 L872.3 2.2" stroke="#9a9a9a" stroke-width="0.7" fill="none"/>
<path d="M881.1 -3 H887.2 L884.15 2.9 Z" fill="none" stroke="#e0954f" stroke-width="1.6" stroke-linejoin="round"/>
<path d="M935.3 2.9 L938.9 -0.5" stroke="#6383c8" stroke-width="1.4" stroke-linecap="round"/><circle cx="940.2" cy="-1.6" r="1.9" fill="none" stroke="#6383c8" stroke-width="1.2"/><path d="M940.6 -2 L942.8 -4.2" stroke="#282828" stroke-width="1.3"/>
<path d="M946 -2.6 H951.7 L948.8 2.6 Z" fill="none" stroke="#1fa882" stroke-width="0.9"/><circle cx="946" cy="-2.6" r="1.2" fill="#1fa882"/><circle cx="951.7" cy="-2.6" r="1.2" fill="none" stroke="#1fa882" stroke-width="0.9"/><circle cx="948.8" cy="2.6" r="1.2" fill="#1fa882"/>
<path d="M999.8 0 Q1002.9 -4.6 1006 0 Q1002.9 4.6 999.8 0 Z" fill="none" stroke="#e6e6e6" stroke-width="1.1"/><circle cx="1002.9" cy="0" r="1.2" fill="#999"/>
<path d="M1009.9 -2.3 H1011.6 L1012.4 -3.5 H1014.8 L1015.6 -2.3 H1017.2 V3.4 H1009.9 Z" fill="#e2e2e2"/><circle cx="1013.55" cy="0.4" r="1.6" fill="#777"/><circle cx="1013.55" cy="0.4" r="0.7" fill="#333"/></g>
<g transform="translate(0 112.10)"><path d="M872.3 -2.2 L874.6 0 L872.3 2.2" stroke="#9a9a9a" stroke-width="0.7" fill="none"/>
<path d="M881.1 -3 H887.2 L884.15 2.9 Z" fill="none" stroke="#e0954f" stroke-width="1.6" stroke-linejoin="round"/>
<path d="M935.3 2.9 L938.9 -0.5" stroke="#6383c8" stroke-width="1.4" stroke-linecap="round"/><circle cx="940.2" cy="-1.6" r="1.9" fill="none" stroke="#6383c8" stroke-width="1.2"/><path d="M940.6 -2 L942.8 -4.2" stroke="#282828" stroke-width="1.3"/>
<path d="M946 -2.6 H951.7 L948.8 2.6 Z" fill="none" stroke="#1fa882" stroke-width="0.9"/><circle cx="946" cy="-2.6" r="1.2" fill="#1fa882"/><circle cx="951.7" cy="-2.6" r="1.2" fill="none" stroke="#1fa882" stroke-width="0.9"/><circle cx="948.8" cy="2.6" r="1.2" fill="#1fa882"/>
<path d="M999.8 0 Q1002.9 -4.6 1006 0 Q1002.9 4.6 999.8 0 Z" fill="none" stroke="#e6e6e6" stroke-width="1.1"/><circle cx="1002.9" cy="0" r="1.2" fill="#999"/>
<path d="M1009.9 -2.3 H1011.6 L1012.4 -3.5 H1014.8 L1015.6 -2.3 H1017.2 V3.4 H1009.9 Z" fill="#e2e2e2"/><circle cx="1013.55" cy="0.4" r="1.6" fill="#777"/><circle cx="1013.55" cy="0.4" r="0.7" fill="#333"/></g>
<g transform="translate(0 122.80)"><path d="M872.3 -2.2 L874.6 0 L872.3 2.2" stroke="#9a9a9a" stroke-width="0.7" fill="none"/>
<path d="M881.1 -3 H887.2 L884.15 2.9 Z" fill="none" stroke="#e0954f" stroke-width="1.6" stroke-linejoin="round"/>
<path d="M935.3 2.9 L938.9 -0.5" stroke="#6383c8" stroke-width="1.4" stroke-linecap="round"/><circle cx="940.2" cy="-1.6" r="1.9" fill="none" stroke="#6383c8" stroke-width="1.2"/><path d="M940.6 -2 L942.8 -4.2" stroke="#282828" stroke-width="1.3"/>
<path d="M946 -2.6 H951.7 L948.8 2.6 Z" fill="none" stroke="#1fa882" stroke-width="0.9"/><circle cx="946" cy="-2.6" r="1.2" fill="#1fa882"/><circle cx="951.7" cy="-2.6" r="1.2" fill="none" stroke="#1fa882" stroke-width="0.9"/><circle cx="948.8" cy="2.6" r="1.2" fill="#1fa882"/>
<path d="M999.8 0 Q1002.9 -4.6 1006 0 Q1002.9 4.6 999.8 0 Z" fill="none" stroke="#e6e6e6" stroke-width="1.1"/><circle cx="1002.9" cy="0" r="1.2" fill="#999"/>
<path d="M1009.9 -2.3 H1011.6 L1012.4 -3.5 H1014.8 L1015.6 -2.3 H1017.2 V3.4 H1009.9 Z" fill="#e2e2e2"/><circle cx="1013.55" cy="0.4" r="1.6" fill="#777"/><circle cx="1013.55" cy="0.4" r="0.7" fill="#333"/></g>
<g transform="translate(0 133.50)"><path d="M872.3 -2.2 L874.6 0 L872.3 2.2" stroke="#9a9a9a" stroke-width="0.7" fill="none"/>
<path d="M881.1 -3 H887.2 L884.15 2.9 Z" fill="none" stroke="#e0954f" stroke-width="1.6" stroke-linejoin="round"/>
<path d="M935.3 2.9 L938.9 -0.5" stroke="#6383c8" stroke-width="1.4" stroke-linecap="round"/><circle cx="940.2" cy="-1.6" r="1.9" fill="none" stroke="#6383c8" stroke-width="1.2"/><path d="M940.6 -2 L942.8 -4.2" stroke="#282828" stroke-width="1.3"/>
<path d="M946 -2.6 H951.7 L948.8 2.6 Z" fill="none" stroke="#1fa882" stroke-width="0.9"/><circle cx="946" cy="-2.6" r="1.2" fill="#1fa882"/><circle cx="951.7" cy="-2.6" r="1.2" fill="none" stroke="#1fa882" stroke-width="0.9"/><circle cx="948.8" cy="2.6" r="1.2" fill="#1fa882"/>
<path d="M999.8 0 Q1002.9 -4.6 1006 0 Q1002.9 4.6 999.8 0 Z" fill="none" stroke="#e6e6e6" stroke-width="1.1"/><circle cx="1002.9" cy="0" r="1.2" fill="#999"/>
<path d="M1009.9 -2.3 H1011.6 L1012.4 -3.5 H1014.8 L1015.6 -2.3 H1017.2 V3.4 H1009.9 Z" fill="#e2e2e2"/><circle cx="1013.55" cy="0.4" r="1.6" fill="#777"/><circle cx="1013.55" cy="0.4" r="0.7" fill="#333"/></g>
<g transform="translate(0 144.20)"><path d="M872.3 -2.2 L874.6 0 L872.3 2.2" stroke="#9a9a9a" stroke-width="0.7" fill="none"/>
<path d="M881.1 -3 H887.2 L884.15 2.9 Z" fill="none" stroke="#e0954f" stroke-width="1.6" stroke-linejoin="round"/>
<path d="M935.3 2.9 L938.9 -0.5" stroke="#6383c8" stroke-width="1.4" stroke-linecap="round"/><circle cx="940.2" cy="-1.6" r="1.9" fill="none" stroke="#6383c8" stroke-width="1.2"/><path d="M940.6 -2 L942.8 -4.2" stroke="#282828" stroke-width="1.3"/>
<path d="M946 -2.6 H951.7 L948.8 2.6 Z" fill="none" stroke="#1fa882" stroke-width="0.9"/><circle cx="946" cy="-2.6" r="1.2" fill="#1fa882"/><circle cx="951.7" cy="-2.6" r="1.2" fill="none" stroke="#1fa882" stroke-width="0.9"/><circle cx="948.8" cy="2.6" r="1.2" fill="#1fa882"/>
<path d="M999.8 0 Q1002.9 -4.6 1006 0 Q1002.9 4.6 999.8 0 Z" fill="none" stroke="#e6e6e6" stroke-width="1.1"/><circle cx="1002.9" cy="0" r="1.2" fill="#999"/>
<path d="M1009.9 -2.3 H1011.6 L1012.4 -3.5 H1014.8 L1015.6 -2.3 H1017.2 V3.4 H1009.9 Z" fill="#e2e2e2"/><circle cx="1013.55" cy="0.4" r="1.6" fill="#777"/><circle cx="1013.55" cy="0.4" r="0.7" fill="#333"/></g>
<g transform="translate(0 154.90)"><path d="M872.3 -2.2 L874.6 0 L872.3 2.2" stroke="#9a9a9a" stroke-width="0.7" fill="none"/>
<path d="M881.1 -3 H887.2 L884.15 2.9 Z" fill="none" stroke="#e0954f" stroke-width="1.6" stroke-linejoin="round"/>
<path d="M935.3 2.9 L938.9 -0.5" stroke="#6383c8" stroke-width="1.4" stroke-linecap="round"/><circle cx="940.2" cy="-1.6" r="1.9" fill="none" stroke="#6383c8" stroke-width="1.2"/><path d="M940.6 -2 L942.8 -4.2" stroke="#282828" stroke-width="1.3"/>
<path d="M946 -2.6 H951.7 L948.8 2.6 Z" fill="none" stroke="#1fa882" stroke-width="0.9"/><circle cx="946" cy="-2.6" r="1.2" fill="#1fa882"/><circle cx="951.7" cy="-2.6" r="1.2" fill="none" stroke="#1fa882" stroke-width="0.9"/><circle cx="948.8" cy="2.6" r="1.2" fill="#1fa882"/>
<path d="M999.8 0 Q1002.9 -4.6 1006 0 Q1002.9 4.6 999.8 0 Z" fill="none" stroke="#e6e6e6" stroke-width="1.1"/><circle cx="1002.9" cy="0" r="1.2" fill="#999"/>
<path d="M1009.9 -2.3 H1011.6 L1012.4 -3.5 H1014.8 L1015.6 -2.3 H1017.2 V3.4 H1009.9 Z" fill="#e2e2e2"/><circle cx="1013.55" cy="0.4" r="1.6" fill="#777"/><circle cx="1013.55" cy="0.4" r="0.7" fill="#333"/></g>

  <g transform="translate(0 165.6)">
   <circle cx="957.6" cy="-1.6" r="1.6" fill="none" stroke="#c8884a" stroke-width="0.9"/><circle cx="961.2" cy="-1.6" r="1.6" fill="none" stroke="#c8884a" stroke-width="0.9"/><rect x="956.2" y="0.8" width="6.2" height="2.4" fill="#c8884a"/><path d="M962.4 1.2 L964 0.4 V3.4 L962.4 2.8 Z" fill="#c8884a"/>
   <rect x="989" y="-2.8" width="6" height="5.2" rx="0.8" fill="#e8e8e8"/><path d="M990.3 -0.3 L991.6 1 L993.8 -1.5" stroke="#222" stroke-width="0.8" fill="none"/>
   <path d="M1000 -1 L1003 1.5 L1006 -1" stroke="#444" stroke-width="0.7" fill="none"/>
   <path d="M1009.9 -2.3 H1011.6 L1012.4 -3.5 H1014.8 L1015.6 -2.3 H1017.2 V3.4 H1009.9 Z" fill="#e2e2e2"/><circle cx="1013.55" cy="0.4" r="1.6" fill="#777"/><circle cx="1013.55" cy="0.4" r="0.7" fill="#333"/>
  </g>
  <rect x="1021" y="127" width="1.3" height="45" rx="0.6" fill="#4a4a4a"/>
 </svg>
 <div class="a" style="left:0;top:0;width:176px;height:13.4px;background:#282828"></div>
</div>
<div class="a" style="left:0;top:27.3px;width:1024px;height:149.7px;overflow:hidden"><div class="a" style="left:0;top:-27.3px;width:1024px;height:200px"><span class="t n" style="left:891.7px;top:22.9px;color:#cccccc;font-size:6.3px;width:29.80px;text-align-last:justify">立方体.011</span>
<span class="t n" style="left:891.7px;top:33.6px;color:#cccccc;font-size:6.3px;width:30.27px;text-align-last:justify">立方体.012</span>
<span class="t n" style="left:891.7px;top:44.3px;color:#cccccc;font-size:6.3px;width:30.27px;text-align-last:justify">立方体.013</span>
<span class="t n" style="left:891.7px;top:55.0px;color:#cccccc;font-size:6.3px;width:30.27px;text-align-last:justify">立方体.014</span>
<span class="t n" style="left:891.7px;top:65.7px;color:#cccccc;font-size:6.3px;width:30.27px;text-align-last:justify">立方体.015</span>
<span class="t n" style="left:891.7px;top:76.4px;color:#cccccc;font-size:6.3px;width:30.27px;text-align-last:justify">立方体.016</span>
<span class="t n" style="left:891.7px;top:87.1px;color:#cccccc;font-size:6.3px;width:30.27px;text-align-last:justify">立方体.017</span>
<span class="t n" style="left:891.7px;top:97.8px;color:#cccccc;font-size:6.3px;width:30.27px;text-align-last:justify">立方体.018</span>
<span class="t n" style="left:891.7px;top:108.5px;color:#cccccc;font-size:6.3px;width:30.27px;text-align-last:justify">立方体.019</span>
<span class="t n" style="left:891.7px;top:119.2px;color:#cccccc;font-size:6.3px;width:30.27px;text-align-last:justify">立方体.020</span>
<span class="t n" style="left:891.7px;top:129.9px;color:#cccccc;font-size:6.3px;width:30.27px;text-align-last:justify">立方体.021</span>
<span class="t n" style="left:891.7px;top:140.6px;color:#cccccc;font-size:6.3px;width:30.27px;text-align-last:justify">立方体.022</span>
<span class="t n" style="left:891.7px;top:151.3px;color:#cccccc;font-size:6.3px;width:30.27px;text-align-last:justify">立方体.023</span>
</div></div>
<div class="a" style="left:851.6px;top:15.8px;width:16px;height:9.6px;border:1px solid #333;background:#252525;border-radius:3px"></div>
<svg class="a" style="left:852px;top:16px" width="16" height="10" viewBox="0 0 16 10"><rect x="2" y="1.5" width="2.5" height="1.5" fill="#ddd"/><path d="M3 3 V7.5 H5 M3 5.3 H5" stroke="#aaa" stroke-width="0.6" fill="none"/><rect x="5.3" y="4.6" width="3.7" height="1.4" fill="#eee"/><rect x="5.3" y="6.8" width="3.7" height="1.4" fill="#eee"/><path d="M10.5 4 L11.8 5.3 L13.1 4" stroke="#bbb" stroke-width="0.7" fill="none"/></svg>
<div class="a" style="left:871.6px;top:15.8px;width:16px;height:9.6px;border:1px solid #333;background:#252525;border-radius:3px"></div>
<svg class="a" style="left:872px;top:16px" width="16" height="10" viewBox="0 0 16 10"><path d="M2 8 V4 L4 2 H8 V6 L6 8 Z" fill="#cfcfcf"/><path d="M4 2 V6 H8 M4 6 L2 8" stroke="#555" stroke-width="0.5" fill="none"/><path d="M10.5 4 L11.8 5.3 L13.1 4" stroke="#bbb" stroke-width="0.7" fill="none"/></svg>
<div class="a" style="left:897.5px;top:15.9px;width:63px;height:9.5px;background:#1d1d1d;border-radius:3px;border:0.6px solid #2c2c2c"></div>
<svg class="a" style="left:900px;top:16.5px" width="9" height="9" viewBox="0 0 9 9"><circle cx="5" cy="3.8" r="2.4" fill="none" stroke="#e0e0e0" stroke-width="0.8"/><path d="M3.3 5.5 L1 7.8" stroke="#e0e0e0" stroke-width="0.9"/></svg>
<span class="t" style="left:910px;top:16.7px;color:#6a6a6a;font-size:6.3px;width:11.64px;text-align-last:justify">検索</span>
<div class="a" style="left:990px;top:15.6px;width:16.3px;height:9.9px;border:1px solid #333;background:#252525;border-radius:3px"></div>
<svg class="a" style="left:990px;top:15.6px" width="17" height="10" viewBox="0 0 17 10"><path d="M1.5 1.5 H7.5 L5.3 4.5 V8.5 L3.7 7.5 V4.5 Z" fill="none" stroke="#ddd" stroke-width="0.7"/><path d="M10.5 4.3 L11.8 5.6 L13.1 4.3" stroke="#bbb" stroke-width="0.7" fill="none"/></svg>
<div class="a" style="left:1009px;top:15.6px;width:10px;height:9.9px;background:#3a3a3a;border-radius:2px"></div>
<svg class="a" style="left:1009px;top:15.6px" width="10" height="10" viewBox="0 0 10 10"><path d="M2 3.5 H6 M2 3.5 V8 H7.5 V5" stroke="#ddd" stroke-width="0.7" fill="none"/><circle cx="7.3" cy="2.8" r="1.6" fill="none" stroke="#ddd" stroke-width="0.6"/><path d="M7.3 1.8 V3.8 M6.3 2.8 H8.3" stroke="#ddd" stroke-width="0.5"/><path d="M3.5 6 H6" stroke="#ddd" stroke-width="0.6"/></svg>
<div id="props" class="a">
 <div class="a" style="left:0;top:0;width:15px;height:347px;background:#232323"></div>
 <div class="a" style="left:1px;top:0.5px;width:14px;height:14px;background:#2b2b2b;border-radius:3px 0 0 0"></div>
 <svg class="a" style="left:0;top:0" width="176" height="347" viewBox="847.2 178.1 175.5 346.7">
  <path d="M853.5 182.6 h2.5 a1.3 1.3 0 0 1 0 2.6 h-2.5 Z M853.5 186.5 h2.5 a1.3 1.3 0 0 1 0 2.6 h-2.5 Z" fill="#eee"/>
  <path d="M852 199 V204 M855.5 199 V204" stroke="#ccc" stroke-width="0.7"/><circle cx="852.3" cy="204" r="1.3" fill="#ddd"/>
  <rect x="857.5" y="328.7" width="5" height="13.3" fill="#303030"/>
  <rect x="858.3" y="296.5" width="1" height="2" fill="#ddd"/>
  <rect x="858.3" y="317.5" width="1" height="1.6" fill="#b07a40"/><rect x="858.3" y="321.5" width="1" height="1.6" fill="#b07a40"/>
  <rect x="858.3" y="334.5" width="1" height="2" fill="#6b8ccc"/>
  <rect x="858.3" y="347.5" width="1" height="1.5" fill="#7777aa"/><rect x="858.3" y="352.5" width="1" height="1.5" fill="#6666bb"/>
  <rect x="858.3" y="362.5" width="1" height="1.5" fill="#7777aa"/><rect x="858.3" y="377.5" width="1" height="2" fill="#6b8ccc"/>
  <rect x="858.3" y="392.5" width="1" height="2" fill="#30b080"/>
  <circle cx="855" cy="410.3" r="3.4" fill="#c8505e"/><path d="M855 406.9 A3.4 3.4 0 0 1 858.4 410.3 H855 Z" fill="#f0c0c8"/><path d="M855 413.7 A3.4 3.4 0 0 1 851.6 410.3 H855 Z" fill="#3a2226"/>
 </svg>
 <div class="a" style="left:19px;top:2px;width:100.5px;height:8.8px;background:#1d1d1d;border-radius:3px"></div>
 <div class="a" style="left:162.8px;top:2px;width:8.5px;height:8.8px;background:#262626;border-radius:2px"></div>
 <svg class="a" style="left:164px;top:4.5px" width="6" height="4" viewBox="0 0 6 4"><path d="M0.8 1 L3 3 L5.2 1" stroke="#bbb" stroke-width="0.7" fill="none"/></svg>
 <span class="t" style="left:106.3px;top:19px;font-size:6.3px;color:#d8d8d8;width:23.28px;text-align-last:justify">スムーズ</span>
 <svg class="a" style="left:161.5px;top:17.5px" width="10" height="10" viewBox="0 0 10 10"><path d="M1.3 8.7 L4 6 M3 4.5 L5.5 7 M4.2 5.8 L6.8 2 L8.1 3.3 L4.2 5.8 M6 1.5 L8.6 4.1" stroke="#bdbdbd" stroke-width="0.75" fill="none"/></svg>
 <div class="a" style="left:19px;top:37.3px;width:153px;height:9.7px;background:#474747;border-radius:3px"></div>
 <span class="t" style="left:67px;top:38.3px;font-size:6.3px;color:#d8d8d8;width:64.03px;text-align-last:justify">モディファイアーを追加</span>
 <div class="a" style="left:19.3px;top:53.2px;width:153px;height:56.5px;background:#373737;border:1px solid #43659c;border-radius:3px"></div>
 <div class="a" style="left:106px;top:72.9px;width:41px;height:7.2px;background:#545454;border-radius:2px 0 0 2px"></div>
 <span class="t n" style="left:108.5px;top:72.5px;font-size:6.3px;color:#e0e0e0">30°</span>
 <div class="a" style="left:147.4px;top:72.9px;width:9.7px;height:7.2px;background:#454545;border-radius:0 2px 2px 0"></div>
 <svg class="a" style="left:147.4px;top:72.9px" width="10" height="8" viewBox="0 0 10 8"><rect x="2" y="1" width="2.5" height="2.5" fill="#eee"/><path d="M2 4.4 H8.2 M2 6.6 H8.2 M5 1 V7" stroke="#eee" stroke-width="0.9"/></svg>
 <div class="a" style="left:162.2px;top:74.6px;width:1.8px;height:1.8px;background:#ddd;border-radius:1px"></div>
 <span class="t" style="left:92.5px;top:84.8px;font-size:6.3px;color:#d8d8d8;width:34.92px;text-align-last:justify">マップを無視</span>
 <div class="a" style="left:162.3px;top:88.3px;width:1.6px;height:1.6px;background:#ddd;border-radius:1px"></div>
 <svg class="a" style="left:24px;top:98px" width="6" height="8" viewBox="0 0 6 8"><path d="M1.5 1.5 L4 4 L1.5 6.5" stroke="#aaa" stroke-width="0.7" fill="none"/></svg>
 <span class="t" style="left:33px;top:98px;font-size:6.3px;color:#d8d8d8;width:11.64px;text-align-last:justify">管理</span>
 <svg class="a" style="left:164px;top:54.5px" width="8" height="8" viewBox="0 0 8 8"><path d="M1 7 L3.2 4.8 M2.4 3.4 L4.6 5.6 M3.5 4.5 L5.6 1.2 L7 2.6 Z" stroke="#ddd" stroke-width="0.8" fill="#ddd"/></svg>
</div>
<div id="tl" class="a">
 <svg class="a" style="left:0;top:0" width="845" height="38" viewBox="1 487.8 845 37.8">
  <rect x="1" y="487.8" width="845" height="12.7" fill="#2b2b2b"/>
  <rect x="1" y="513" width="845" height="12.6" fill="#232323"/>
  <rect x="31.3" y="513" width="783.4" height="12.6" fill="#2c2c2c"/>
  <rect x="27.7" y="513" width="1" height="12.5" fill="#1a1a1a"/><rect x="43.4" y="513" width="1" height="12.5" fill="#1a1a1a"/><rect x="59.1" y="513" width="1" height="12.5" fill="#1a1a1a"/><rect x="74.8" y="513" width="1" height="12.5" fill="#1a1a1a"/><rect x="90.6" y="513" width="1" height="12.5" fill="#1a1a1a"/><rect x="106.3" y="513" width="1" height="12.5" fill="#1a1a1a"/><rect x="122.0" y="513" width="1" height="12.5" fill="#1a1a1a"/><rect x="137.8" y="513" width="1" height="12.5" fill="#1a1a1a"/><rect x="153.5" y="513" width="1" height="12.5" fill="#1a1a1a"/><rect x="169.2" y="513" width="1" height="12.5" fill="#1a1a1a"/><rect x="185.0" y="513" width="1" height="12.5" fill="#1a1a1a"/><rect x="200.7" y="513" width="1" height="12.5" fill="#1a1a1a"/><rect x="216.4" y="513" width="1" height="12.5" fill="#1a1a1a"/><rect x="232.1" y="513" width="1" height="12.5" fill="#1a1a1a"/><rect x="247.9" y="513" width="1" height="12.5" fill="#1a1a1a"/><rect x="263.6" y="513" width="1" height="12.5" fill="#1a1a1a"/><rect x="279.3" y="513" width="1" height="12.5" fill="#1a1a1a"/><rect x="295.1" y="513" width="1" height="12.5" fill="#1a1a1a"/><rect x="310.8" y="513" width="1" height="12.5" fill="#1a1a1a"/><rect x="326.5" y="513" width="1" height="12.5" fill="#1a1a1a"/><rect x="342.3" y="513" width="1" height="12.5" fill="#1a1a1a"/><rect x="358.0" y="513" width="1" height="12.5" fill="#1a1a1a"/><rect x="373.7" y="513" width="1" height="12.5" fill="#1a1a1a"/><rect x="389.4" y="513" width="1" height="12.5" fill="#1a1a1a"/><rect x="405.2" y="513" width="1" height="12.5" fill="#1a1a1a"/><rect x="420.9" y="513" width="1" height="12.5" fill="#1a1a1a"/><rect x="436.6" y="513" width="1" height="12.5" fill="#1a1a1a"/><rect x="452.4" y="513" width="1" height="12.5" fill="#1a1a1a"/><rect x="468.1" y="513" width="1" height="12.5" fill="#1a1a1a"/><rect x="483.8" y="513" width="1" height="12.5" fill="#1a1a1a"/><rect x="499.6" y="513" width="1" height="12.5" fill="#1a1a1a"/><rect x="515.3" y="513" width="1" height="12.5" fill="#1a1a1a"/><rect x="531.0" y="513" width="1" height="12.5" fill="#1a1a1a"/><rect x="546.7" y="513" width="1" height="12.5" fill="#1a1a1a"/><rect x="562.5" y="513" width="1" height="12.5" fill="#1a1a1a"/><rect x="578.2" y="513" width="1" height="12.5" fill="#1a1a1a"/><rect x="593.9" y="513" width="1" height="12.5" fill="#1a1a1a"/><rect x="609.7" y="513" width="1" height="12.5" fill="#1a1a1a"/><rect x="625.4" y="513" width="1" height="12.5" fill="#1a1a1a"/><rect x="641.1" y="513" width="1" height="12.5" fill="#1a1a1a"/><rect x="656.9" y="513" width="1" height="12.5" fill="#1a1a1a"/><rect x="672.6" y="513" width="1" height="12.5" fill="#1a1a1a"/><rect x="688.3" y="513" width="1" height="12.5" fill="#1a1a1a"/><rect x="704.0" y="513" width="1" height="12.5" fill="#1a1a1a"/><rect x="719.8" y="513" width="1" height="12.5" fill="#1a1a1a"/><rect x="735.5" y="513" width="1" height="12.5" fill="#1a1a1a"/><rect x="751.2" y="513" width="1" height="12.5" fill="#1a1a1a"/><rect x="767.0" y="513" width="1" height="12.5" fill="#1a1a1a"/><rect x="782.7" y="513" width="1" height="12.5" fill="#1a1a1a"/><rect x="798.4" y="513" width="1" height="12.5" fill="#1a1a1a"/><rect x="814.2" y="513" width="1" height="12.5" fill="#1a1a1a"/><rect x="829.9" y="513" width="1" height="12.5" fill="#1a1a1a"/>
  <rect x="3.5" y="520.2" width="838.5" height="3.9" rx="1.95" fill="#474747"/>
  <circle cx="6.6" cy="522.15" r="1.2" fill="none" stroke="#222" stroke-width="0.6"/>
  <circle cx="839.6" cy="522.15" r="1.2" fill="#333" stroke="#222" stroke-width="0.5"/>
  <g font-family="Liberation Sans" font-size="6.4" fill="#bdbdbd"><text x="59.0" y="509.5" text-anchor="middle">10</text><text x="90.5" y="509.5" text-anchor="middle">20</text><text x="121.9" y="509.5" text-anchor="middle">30</text><text x="153.4" y="509.5" text-anchor="middle">40</text><text x="184.9" y="509.5" text-anchor="middle">50</text><text x="216.3" y="509.5" text-anchor="middle">60</text><text x="247.8" y="509.5" text-anchor="middle">70</text><text x="279.2" y="509.5" text-anchor="middle">80</text><text x="310.7" y="509.5" text-anchor="middle">90</text><text x="342.2" y="509.5" text-anchor="middle">100</text><text x="373.6" y="509.5" text-anchor="middle">110</text><text x="405.1" y="509.5" text-anchor="middle">120</text><text x="436.5" y="509.5" text-anchor="middle">130</text><text x="468.0" y="509.5" text-anchor="middle">140</text><text x="499.5" y="509.5" text-anchor="middle">150</text><text x="530.9" y="509.5" text-anchor="middle">160</text><text x="562.4" y="509.5" text-anchor="middle">170</text><text x="593.8" y="509.5" text-anchor="middle">180</text><text x="625.3" y="509.5" text-anchor="middle">190</text><text x="656.8" y="509.5" text-anchor="middle">200</text><text x="688.2" y="509.5" text-anchor="middle">210</text><text x="719.7" y="509.5" text-anchor="middle">220</text><text x="751.1" y="509.5" text-anchor="middle">230</text><text x="782.6" y="509.5" text-anchor="middle">240</text><text x="814.1" y="509.5" text-anchor="middle">250</text></g>
  <path d="M2 510 L4 512.2 L2 514.4" stroke="#777" stroke-width="0.7" fill="none"/>
  <path d="M844.5 510 L842.6 512.2 L844.5 514.4" stroke="#666" stroke-width="0.7" fill="none"/>
  <path d="M31.30 511 V525.6" stroke="#4772b3" stroke-width="1"/>
  <rect x="25" y="502.9" width="12.9" height="8.7" rx="2.2" fill="#4772b3"/>
  <text x="31.45" y="509.6" text-anchor="middle" font-family="Liberation Sans" font-size="6.4" font-weight="bold" fill="#f0f0f0">1</text>
  <!-- header -->
  <rect x="5" y="490" width="15.6" height="9" rx="2.5" fill="#262626"/>
  <circle cx="10.5" cy="494.5" r="3.2" fill="#e6e6e6"/><path d="M11.5 491.8 L9.5 494.5 L11.5 497.2" stroke="#262626" stroke-width="0.9" fill="none"/>
  <path d="M15 493.4 L16.6 495.1 L18.2 493.4" stroke="#c8c8c8" stroke-width="0.8" fill="none"/>
  <rect x="25" y="490" width="66" height="9" rx="2.5" fill="#262626"/>
  <path d="M47.8 490 V499" stroke="#2f2f2f" stroke-width="0.8"/>
  <path d="M42.8 493.4 L44.4 495.1 L46 493.4 M85.8 493.4 L87.4 495.1 L89 493.4" stroke="#c8c8c8" stroke-width="0.8" fill="none"/>
  <rect x="374" y="489.8" width="19.6" height="9.7" rx="2.5" fill="#262626"/>
  <rect x="374" y="489.8" width="9.6" height="9.7" rx="2.5" fill="#3d3d3d"/>
  <circle cx="378.8" cy="494.65" r="2.6" fill="none" stroke="#888" stroke-width="0.8"/>
  <path d="M387.3 494 L388.6 495.3 L389.9 494" stroke="#555" stroke-width="0.6" fill="none"/>
  <rect x="397.8" y="489.8" width="63" height="9.7" rx="2.5" fill="#3d3d3d"/>
  <g fill="#e2e2e2">
   <rect x="400.3" y="491.9" width="1.3" height="5.6"/><path d="M406.3 491.9 V497.5 L402 494.7 Z"/>
   <path d="M408.8 494.7 L411 492.4 L413.2 494.7 L411 497 Z M418 492.1 V497.3 L414 494.7 Z"/>
   <path d="M426.4 491.7 V497.7 L421.4 494.7 Z"/>
   <path d="M432 491.7 V497.7 L437 494.7 Z"/>
   <path d="M440.5 492.1 V497.3 L444.5 494.7 Z M445.3 494.7 L447.5 492.4 L449.7 494.7 L447.5 497 Z"/>
   <path d="M452.4 491.9 V497.5 L456.7 494.7 Z"/><rect x="457.1" y="491.9" width="1.3" height="5.6"/>
  </g>
  <rect x="696.3" y="490" width="39.3" height="9.6" rx="2.5" fill="#545454"/>
  <text x="716" y="496.9" text-anchor="middle" font-family="Liberation Sans" font-size="6.4" fill="#e6e6e6">1</text>
  <rect x="739" y="490" width="103" height="9.6" rx="2.5" fill="#545454"/>
  <rect x="739" y="490" width="10.8" height="9.6" rx="2.5" fill="#3d3d3d"/>
  <rect x="745" y="490" width="4.8" height="9.6" fill="#3d3d3d"/>
  <path d="M795.5 490 V499.6" stroke="#4a4a4a" stroke-width="0.6"/>
  <circle cx="744.4" cy="495.2" r="2.9" fill="none" stroke="#e0e0e0" stroke-width="0.8"/><path d="M744.4 493.5 V495.3 H745.8 M742 491.6 L743 492.4 M746.8 491.6 L745.8 492.4" stroke="#e0e0e0" stroke-width="0.6" fill="none"/>
  <text x="787" y="496.9" text-anchor="end" font-family="Liberation Sans" font-size="6.4" fill="#e6e6e6">1</text>
  <text x="834.8" y="496.9" text-anchor="end" font-family="Liberation Sans" font-size="6.4" fill="#e6e6e6">250</text>
 </svg>
 <span class="t" style="left:27.5px;top:3.3px;font-size:6.3px;width:11.64px;text-align-last:justify">再生</span>
 <span class="t" style="left:52px;top:3.3px;font-size:6.3px;width:29.11px;text-align-last:justify">キーイング</span>
 <span class="t" style="left:95px;top:3.3px;font-size:6.3px;width:17.47px;text-align-last:justify">ビュー</span>
 <span class="t" style="left:120.7px;top:3.3px;font-size:6.3px;width:23.28px;text-align-last:justify">マーカー</span>
 <span class="t" style="left:757px;top:3.3px;font-size:6.3px;width:11.64px;text-align-last:justify">開始</span>
 <span class="t" style="left:803px;top:3.3px;font-size:6.3px;width:11.64px;text-align-last:justify">終了</span>
</div>
<div id="status" class="a">
 <div class="a" style="left:5px;top:2px;width:17.6px;height:9px;border:0.8px solid #5a5a5a;border-radius:2.5px"></div>
 <span class="t" style="left:6.6px;top:2.9px;font-size:3.9px;color:#aaa;line-height:8px;width:15.28px;text-align-last:justify">スペース</span>
 <span class="t" style="left:25px;top:2.5px;font-size:6.3px;color:#aaa;width:11.64px;text-align-last:justify">検索</span>
 <span class="t n" style="left:1004px;top:2.5px;font-size:6.3px;color:#888">4.3.2</span>
</div>
<!-- menus -->
<div class="a" style="left:857.1px;top:154.3px;width:95.8px;height:114.7px;background:#181818;border-radius:4px"></div>
<div class="a" style="left:859.3px;top:211px;width:91.3px;height:9px;background:#444444;border-radius:2px"></div>
<svg class="a" style="left:0;top:0" width="1024" height="538">
 <path d="M861 168.7 H949 M861 183.4 H949 M861 197.5 H949 M861 254.5 H949" stroke="#2c2c2c" stroke-width="0.8"/>
 <circle cx="867.7" cy="174.6" r="2.5" fill="none" stroke="#ddd" stroke-width="0.8"/><path d="M865.9 176.4 L863.4 178.9" stroke="#ddd" stroke-width="0.9"/>
 <circle cx="864.5" cy="188" r="0.8" fill="#ccc"/><circle cx="866" cy="190.3" r="1" fill="#ddd"/><circle cx="868.6" cy="191.6" r="1.8" fill="#eee"/>
 <path d="M946.6 203 L949 204.5 L946.6 206 Z M946.6 213.9 L949 215.4 L946.6 216.9 Z M946.6 260.3 L949 261.8 L946.6 263.3 Z" fill="#aaa"/>
</svg>
<span class="t" style="left:861.5px;top:157.6px;font-size:6.3px;color:#8c8c8c;width:64.03px;text-align-last:justify">モディファイアーを追加</span>
<span class="t" style="left:874px;top:171.8px;font-size:6.3px;color:#dedede;width:16.36px;text-align-last:justify">検索...</span>
<span class="t" style="left:874px;top:186.5px;font-size:6.3px;color:#dedede;width:46.56px;text-align-last:justify">ジオメトリノード</span>
<span class="t" style="left:874px;top:200.7px;font-size:6.3px;color:#dedede;width:11.64px;text-align-last:justify">編集</span>
<span class="t" style="left:874px;top:211.6px;font-size:6.3px;color:#f0f0f0;width:11.64px;text-align-last:justify">生成</span>
<span class="t" style="left:874px;top:222.3px;font-size:6.3px;color:#dedede;width:11.64px;text-align-last:justify">変形</span>
<span class="t" style="left:874px;top:258px;font-size:6.3px;color:#dedede;width:17.47px;text-align-last:justify">ヘアー</span>
<!-- submenu -->
<div class="a" style="left:750.2px;top:208.4px;width:107.3px;height:194.3px;background:#181818;border-radius:4px"></div>
<div class="a" style="left:751.5px;top:210.2px;width:104.5px;height:9.3px;background:#474747;border-radius:2px"></div>
<svg class="a" style="left:0;top:0" width="1024" height="538"><g transform="translate(755 214.80)"><rect x="0.8" y="-2" width="1.8" height="5.2" fill="none" stroke="#c8c8c8" stroke-width="0.6"/><rect x="3.4" y="-3" width="2" height="6.4" fill="none" stroke="#c8c8c8" stroke-width="0.6"/><path d="M6 -4.2 H7.2 A1.6 1.6 0 0 1 8.8 -2.6 V2 A1.6 1.6 0 0 1 7.2 3.6 H6 Z" fill="#d8d8d8"/></g>
<g transform="translate(755 225.48)"><path d="M1 4 V-4 H8.2 V4 Z" fill="none" stroke="#777" stroke-width="0.5"/><path d="M1 4 L1 0.5 L4.8 -4 H8.2 V4 Z M1 4 L8.2 -4" fill="none" stroke="#d0d0d0" stroke-width="0.7"/></g>
<g transform="translate(755 236.16)"><circle cx="3" cy="-2" r="2.2" fill="none" stroke="#c8c8c8" stroke-width="0.7"/><path d="M3.2 0.6 V4 H8.2 V-1.6 H5.6" fill="none" stroke="#d0d0d0" stroke-width="0.7"/><path d="M4.6 0.2 H6.6 V2.4" fill="none" stroke="#d0d0d0" stroke-width="0.7"/></g>
<g transform="translate(755 246.84)"><rect x="1" y="0.2" width="3" height="3.6" fill="none" stroke="#c8c8c8" stroke-width="0.6"/><rect x="4.6" y="0.2" width="3" height="3.6" fill="none" stroke="#c8c8c8" stroke-width="0.6"/><rect x="1.5" y="-2.6" width="2" height="2" fill="#d0d0d0"/><rect x="6.3" y="-4.3" width="1.6" height="1.6" fill="#d0d0d0"/></g>
<g transform="translate(755 257.52)"><rect x="1" y="-4" width="7.2" height="8" fill="none" stroke="#c8c8c8" stroke-width="0.7"/><path d="M1 4 L8.2 -4" stroke="#d0d0d0" stroke-width="0.7"/></g>
<g transform="translate(755 268.20)"><path d="M1 4 V-1.5 H2.4 M3.6 -4 H8 V4 H3.6" fill="none" stroke="#888" stroke-width="0.7"/><rect x="1.3" y="-0.4" width="5.8" height="4.2" fill="#4a4a4a"/></g>
<g transform="translate(755 278.88)"><rect x="0.8" y="-4" width="7.6" height="8" fill="#eee"/><circle cx="4.6" cy="0" r="2.1" fill="#181818"/></g>
<g transform="translate(755 289.56)"><path d="M4.5 -4.5 V4.5" stroke="#aaa" stroke-width="0.5" stroke-dasharray="0.9 0.7"/><path d="M3.6 -3.8 Q0.8 -4.2 1.2 -1.5 Q2.2 0 1.2 1.5 Q0.8 4.2 3.6 3.8 M5.4 -3.8 Q8.2 -4.2 7.8 -1.5 Q6.8 0 7.8 1.5 Q8.2 4.2 5.4 3.8" fill="none" stroke="#c8c8c8" stroke-width="0.7"/></g>
<g transform="translate(755 300.24)"><path d="M1 -1.8 H8 M1 1.6 H8 M2.8 -4 V4 M6.2 -4 V4" stroke="#c8c8c8" stroke-width="0.7"/></g>
<g transform="translate(755 310.92)"><circle cx="4.5" cy="0" r="3.8" fill="none" stroke="#c8c8c8" stroke-width="0.7"/><path d="M4.5 -3.8 V3.8" stroke="#c8c8c8" stroke-width="0.6"/><path d="M4.5 -3.8 A3.8 3.8 0 0 1 4.5 3.8 Z" fill="#999"/></g>
<g transform="translate(755 321.60)"><ellipse cx="4.2" cy="-2" rx="3" ry="1.7" fill="none" stroke="#c8c8c8" stroke-width="0.7"/><ellipse cx="4.8" cy="2.1" rx="3" ry="1.7" fill="none" stroke="#c8c8c8" stroke-width="0.7"/></g>
<g transform="translate(755 332.28)"><path d="M1 4 H8 V1 Q8 -0.5 6.5 -0.5 H4.5 V-3 Q4.5 -4 3.5 -4 H2.5 Q1 -4 1 -2.5 Z" fill="none" stroke="#c8c8c8" stroke-width="0.7"/></g>
<g transform="translate(755 342.96)"><path d="M1 -2 H6.3 V4.2 H1 Z M1 -2 L2.8 -4.2 H8.2 V2 L6.3 4.2 M6.3 -2 L8.2 -4.2" fill="none" stroke="#c8c8c8" stroke-width="0.7"/></g>
<g transform="translate(755 353.64)"><rect x="1" y="-4" width="7.5" height="8" fill="none" stroke="#c8c8c8" stroke-width="0.7"/><circle cx="4.75" cy="0" r="2.3" fill="none" stroke="#c8c8c8" stroke-width="0.7"/></g>
<g transform="translate(755 364.32)"><rect x="1" y="-4" width="7.5" height="8" fill="none" stroke="#c8c8c8" stroke-width="0.7"/><rect x="4.6" y="-3" width="2.6" height="6" fill="#c8c8c8"/><path d="M4.6 3 L7.2 -3" stroke="#181818" stroke-width="0.6"/></g>
<g transform="translate(755 375.00)"><path d="M1.2 3.8 H7.8 Q8.6 3.8 8 2.6 L5.4 -3.2 Q4.6 -4.6 3.6 -3.2 L1.2 1 Q0.4 3.8 1.2 3.8 Z" fill="none" stroke="#c8c8c8" stroke-width="0.7"/><path d="M3.2 0.2 Q4.8 1 5 3.8" fill="none" stroke="#c8c8c8" stroke-width="0.6"/></g>
<g transform="translate(755 385.68)"><path d="M1.5 3.6 L3.2 1.6 M4.6 0 L6.6 -2.4" stroke="#c8c8c8" stroke-width="0.7" stroke-dasharray="1 0.8"/><circle cx="1.5" cy="3.6" r="0.8" fill="#d0d0d0"/><circle cx="7.2" cy="-3.3" r="0.9" fill="#d0d0d0"/></g>
<g transform="translate(755 396.36)"><path d="M1 -2 H6.3 V4.2 H1 Z M1 -2 L2.8 -4.2 H8.2 V2 L6.3 4.2 M6.3 -2 L8.2 -4.2 M3.6 -2 V4.2 M1 1.1 H6.3" fill="none" stroke="#c8c8c8" stroke-width="0.6"/></g>
</svg>
<span class="t" style="left:767px;top:211.10px;font-size:6.3px;color:#dedede;width:11.64px;text-align-last:justify">配列</span>
<span class="t" style="left:767px;top:221.78px;font-size:6.3px;color:#dedede;width:17.47px;text-align-last:justify">ベベル</span>
<span class="t" style="left:767px;top:232.46px;font-size:6.3px;color:#dedede;width:29.11px;text-align-last:justify">ブーリアン</span>
<span class="t" style="left:767px;top:243.14px;font-size:6.3px;color:#dedede;width:17.47px;text-align-last:justify">ビルド</span>
<span class="t" style="left:767px;top:253.82px;font-size:6.3px;color:#dedede;width:29.11px;text-align-last:justify">デシメート</span>
<span class="t" style="left:767px;top:264.50px;font-size:6.3px;color:#dedede;width:17.47px;text-align-last:justify">辺分離</span>
<span class="t" style="left:767px;top:275.18px;font-size:6.3px;color:#dedede;width:17.47px;text-align-last:justify">マスク</span>
<span class="t" style="left:767px;top:285.86px;font-size:6.3px;color:#dedede;width:17.47px;text-align-last:justify">ミラー</span>
<span class="t" style="left:767px;top:296.54px;font-size:6.3px;color:#dedede;width:64.03px;text-align-last:justify">マルチレゾリューション</span>
<span class="t" style="left:767px;top:307.22px;font-size:6.3px;color:#dedede;width:29.11px;text-align-last:justify">リメッシュ</span>
<span class="t" style="left:767px;top:317.90px;font-size:6.3px;color:#dedede;width:29.11px;text-align-last:justify">スクリュー</span>
<span class="t" style="left:767px;top:328.58px;font-size:6.3px;color:#dedede;width:17.47px;text-align-last:justify">スキン</span>
<span class="t" style="left:767px;top:339.26px;font-size:6.3px;color:#dedede;width:29.11px;text-align-last:justify">ソリッド化</span>
<span class="t" style="left:767px;top:349.94px;font-size:6.3px;color:#dedede;width:75.67px;text-align-last:justify">サブディビジョンサーフェス</span>
<span class="t" style="left:767px;top:360.62px;font-size:6.3px;color:#dedede;width:23.28px;text-align-last:justify">三角面化</span>
<span class="t" style="left:767px;top:371.30px;font-size:6.3px;color:#dedede;width:64.03px;text-align-last:justify">ボリュームのメッシュ化</span>
<span class="t" style="left:767px;top:381.98px;font-size:6.3px;color:#dedede;width:11.64px;text-align-last:justify">溶接</span>
<span class="t" style="left:767px;top:392.66px;font-size:6.3px;color:#dedede;width:46.56px;text-align-last:justify">ワイヤーフレーム</span>

<!-- tooltip -->
<div class="a" style="left:806.5px;top:226.2px;width:205px;height:24.7px;background:#1b1b1b;border-radius:4px"></div>
<span class="t" style="left:813.5px;top:230.6px;font-size:6.02px;letter-spacing:-0.11px;color:#e6e6e6;width:191.61px;text-align-last:justify">アクティブオブジェクトに手続き型操作・エフェクトを追加します: <span style="color:#6a8cc8">配列</span></span>
<span class="t" style="left:813.5px;top:237.6px;font-size:6.02px;letter-spacing:-0.11px;color:#c8c8c8;width:117.81px;text-align-last:justify">形状のコピーをオフセット付きで作成します</span>
</body></html>
